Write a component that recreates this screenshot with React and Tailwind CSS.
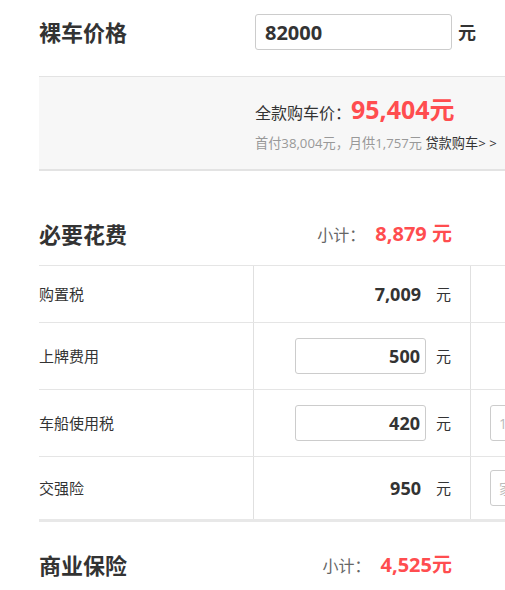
import React from "react";

const font = { fontFamily: '"Open Sans", "Noto Sans CJK SC", sans-serif' };

const rows = [
  { label: "购置税", value: "7,009" },
  { label: "上牌费用", value: "500", input: true },
  { label: "车船使用税", value: "420", input: true, extra: "1" },
  { label: "交强险", value: "950", extra: "家" },
];

const rowHeights = ["h-[56px]", "h-[67px]", "h-[67px]", "h-[63px]"];

const Row = ({ row, h, first }) => (
  <div className={`flex ${h} ${first ? "" : "border-t border-[#e5e5e5]"}`}>
    <div className="w-[214px] shrink-0 flex items-center text-[15px] text-[#333]">
      {row.label}
    </div>
    <div className="w-[217px] shrink-0 flex items-center justify-end pr-[19px] border-l border-[#e0e0e0]">
      {row.input ? (
        <input
          defaultValue={row.value}
          className="w-[131px] h-[36px] border border-[#cccccc] rounded-[3px] text-right pr-[5px] text-[18px] font-bold text-[#333] outline-0"
        />
      ) : (
        <span className="pr-[5px] text-[18px] font-bold text-[#333]">{row.value}</span>
      )}
      <span className="ml-[10px] text-[15px] text-[#333]">元</span>
    </div>
    <div className="flex-1 flex items-center pl-[19px] border-l border-[#e0e0e0]">
      {row.extra && (
        <input
          placeholder={row.extra + "0000"}
          className="w-[131px] h-[36px] border border-[#cccccc] rounded-[3px] pl-[8px] text-[14px] placeholder:text-[#bbb] outline-0"
        />
      )}
    </div>
  </div>
);

const Subtotal = ({ title, value, top }) => (
  <div className={`${top} h-[30px] w-[413px] flex items-center justify-between`}>
    <h2 className="text-[22px] font-bold text-[#333]">{title}</h2>
    <div className="flex items-baseline">
      <span className="text-[16px] text-[#666] mr-[10px]">小计：</span>
      <span className="text-[20px] font-bold text-[#ff4d4f]">{value}</span>
    </div>
  </div>
);

export default function App() {
  return (
    <div className="w-[505px] h-[590px] overflow-hidden bg-white" style={font}>
      <div className="pl-[39px] w-[800px]">
        {/* bare price */}
        <div className="h-[76px] flex items-start pt-[14px]">
          <h2 className="w-[216px] text-[22px] font-bold text-[#333] leading-[36px]">裸车价格</h2>
          <input
            defaultValue="82000"
            className="w-[197px] h-[36px] border border-[#cccccc] rounded-[3px] pl-[9px] text-[20px] font-bold text-[#333] outline-0"
          />
          <span className="ml-[6px] text-[18px] font-bold text-[#333] leading-[36px]">元</span>
        </div>

        {/* total band */}
        <div className="h-[95px] bg-[#f7f7f7] border-t border-[#e3e3e3] border-b-2 border-b-[#e3e3e3] pl-[216px] pt-[15px]">
          <div className="flex items-baseline text-[#333] leading-[34px]">
            <span className="text-[16px]">全款购车价：</span>
            <span className="text-[25px] font-bold text-[#ff4d4f]">95,404元</span>
          </div>
          <div className="mt-[3px] text-[13.2px] text-[#999] leading-[20px]">
            首付38,004元，月供1,757元 <span className="text-[#333]">贷款购车&gt; &gt;</span>
          </div>
        </div>

        {/* necessary costs */}
        <Subtotal title="必要花费" value="8,879 元" top="mt-[48px] mb-[16px]" />

        <div className="border-t border-[#e5e5e5] border-b-[3px] border-b-[#e8e8e8]">
          {rows.map((r, i) => (
            <Row key={r.label} row={r} h={rowHeights[i]} first={i === 0} />
          ))}
        </div>

        {/* commercial insurance */}
        <Subtotal title="商业保险" value="4,525元" top="mt-[28px]" />
      </div>
    </div>
  );
}
